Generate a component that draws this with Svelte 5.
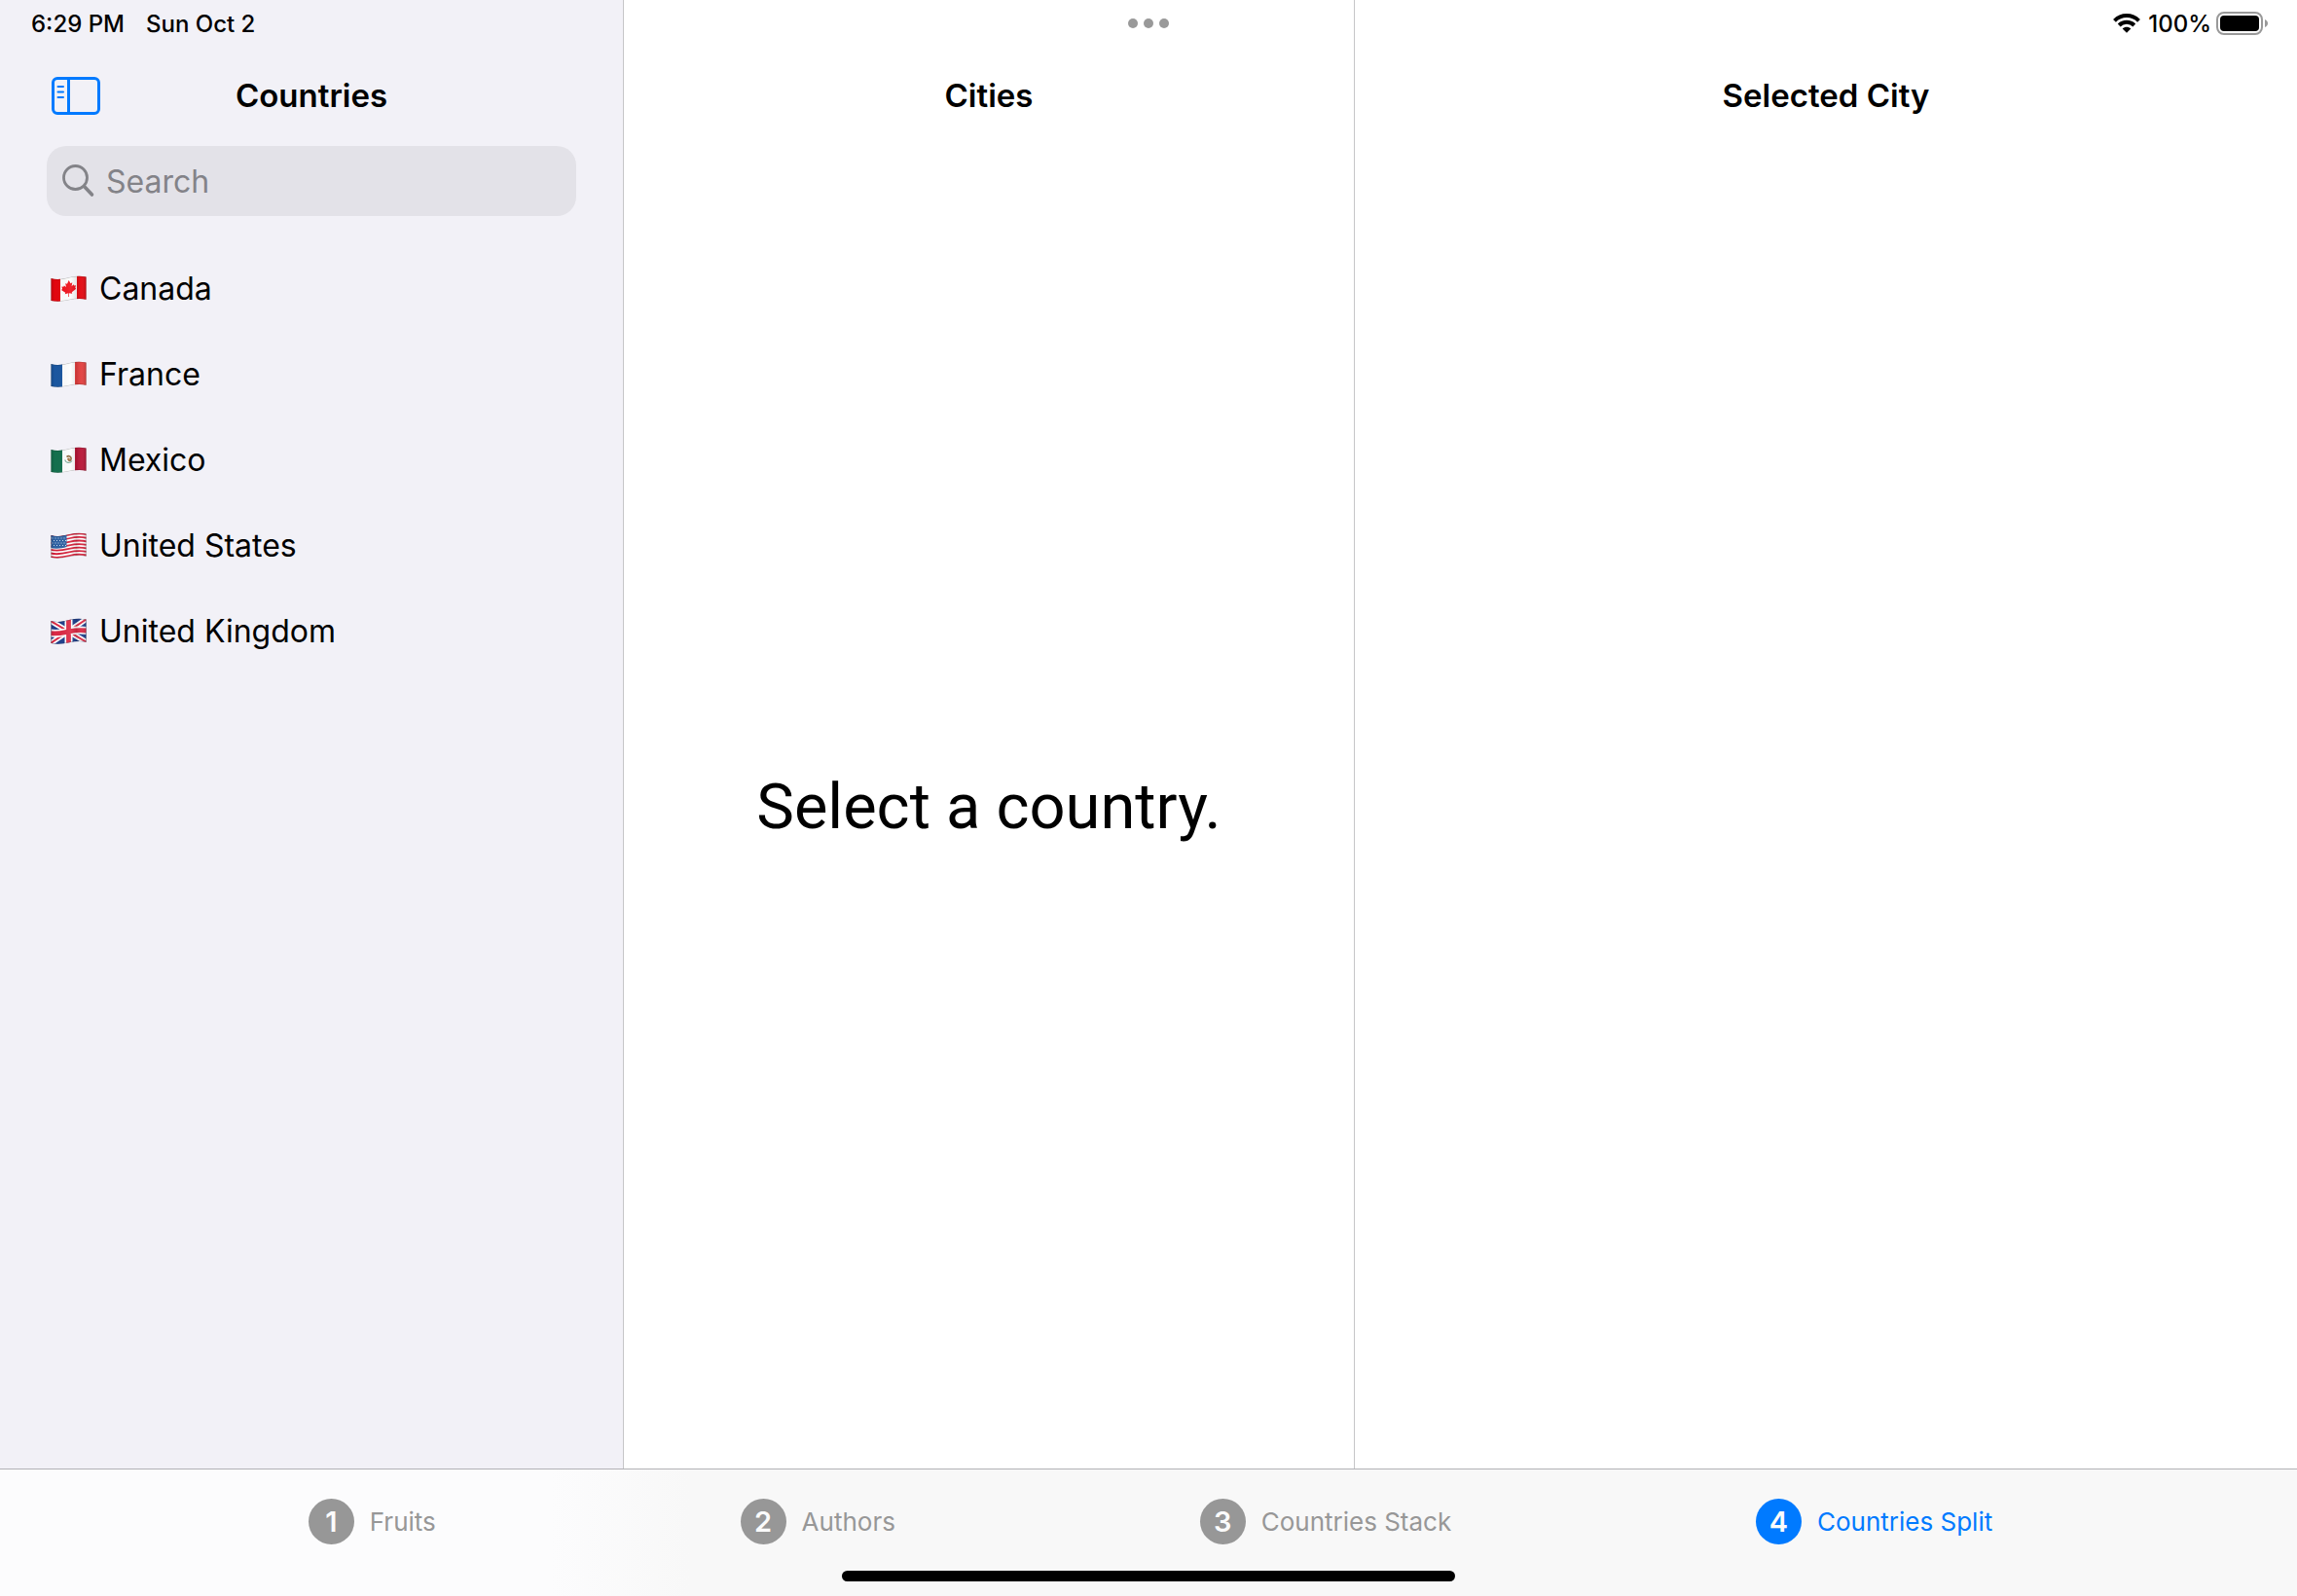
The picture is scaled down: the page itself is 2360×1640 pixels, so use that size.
<script>
  const countries = [
    { code: 'ca', name: 'Canada' },
    { code: 'fr', name: 'France' },
    { code: 'mx', name: 'Mexico' },
    { code: 'us', name: 'United States' },
    { code: 'gb', name: 'United Kingdom' },
  ];
  const tabs = ['Fruits', 'Authors', 'Countries Stack', 'Countries Split'];
  const stripes = [0, 1, 2, 3, 4, 5, 6];

  let query = $state('');
  let activeTab = $state(3);
  let shown = $derived(
    countries.filter((c) => c.name.toLowerCase().includes(query.toLowerCase()))
  );
</script>

<!-- Every flag shares one waving outline. -->
{#snippet flag(code)}
  <svg class="flag" viewBox="0 0 37 27" aria-hidden="true">
    <defs>
      <clipPath id="wave-{code}">
        <path d="M.5 3C7 5 13 3.5 19 2S31 .2 36.500 1.500V24.800C31 23.400 25 24 19 25.300S7 27.500 .5 26Z" />
      </clipPath>
      <linearGradient id="shade-{code}">
        <stop offset="0" stop-color="#000" stop-opacity=".16" />
        <stop offset=".12" stop-color="#000" stop-opacity="0" />
        <stop offset=".55" stop-color="#fff" stop-opacity=".08" />
        <stop offset=".72" stop-color="#000" stop-opacity=".1" />
        <stop offset=".85" stop-color="#fff" stop-opacity=".05" />
        <stop offset="1" stop-color="#000" stop-opacity=".18" />
      </linearGradient>
    </defs>
    <g clip-path="url(#wave-{code})">
      {#if code === 'us'}
        <rect width="37" height="27" fill="#fff" />
        {#each stripes as i}
          <path
            transform="translate(0 {i * 3.55})"
            d="M0 3.700C7 5.700 13 4.200 19 2.700S31 .9 37 2.200"
            fill="none" stroke="#d5203a" stroke-width="1.800"
          />
        {/each}
        <path d="M0 2C6 5 11 4 16.500 2V15C11 16.500 6 17.500 0 16Z" fill="#2f62a3" />
        <g stroke="#c9d8ec" stroke-width="1" stroke-dasharray="1 2">
          <path d="M1.500 6H16M3 8.500H16M1.500 11H16M3 13.500H16" />
        </g>
      {:else if code === 'gb'}
        <rect width="37" height="27" fill="#1f3f8c" />
        <path d="M0 3L37 25M0 26L37 1" stroke="#fff" stroke-width="5.500" />
        <path d="M0 3L37 25M0 26L37 1" stroke="#dc2a45" stroke-width="2" />
        <path d="M18.500 0V27M0 15.500C8 17 13 15 19 13.800S30 12 37 13" fill="none" stroke="#fff" stroke-width="8" />
        <path d="M18.500 0V27M0 15.500C8 17 13 15 19 13.800S30 12 37 13" fill="none" stroke="#dc2a45" stroke-width="4.800" />
      {:else}
        <rect width="37" height="27" fill="#fdfdfd" />
        {#if code === 'ca'}
          <path d="M0 0H10V27H0ZM27 0H37V27H27Z" fill="#e3060f" />
          <path
            d="M18.700 5L20.500 8.200L22.300 7.300L21.600 11.300L23.600 9.300L24.200 10.600L26 10.200L25.300 12.800L26.200 13.800L21.800 17.200L22.200 18.700L18.900 18.200V22H18.200V18.300L14.800 19.200L15.200 17.700L11 14.900L12 14L11.400 11.600L13.300 11.700L13.900 10.400L16 12L15.200 8.200L17 8.800Z"
            fill="#f0101a"
          />
        {:else if code === 'fr'}
          <path d="M0 0H12V27H0Z" fill="#1b57a0" />
          <path d="M25 0H37V27H25Z" fill="#e23e3d" />
        {:else}
          <path d="M0 0H12V27H0Z" fill="#14704e" />
          <path d="M25 0H37V27H25Z" fill="#b81536" />
          <path d="M16.500 10.500C18 9 20.500 9.500 21 11.500C21.500 13.500 20 15 18.500 14" fill="none" stroke="#8a6238" stroke-width="1.600" />
          <path d="M14.800 13.500C15.500 17 20 17.500 22 14.500" fill="none" stroke="#7fae9c" stroke-width="1.200" />
          <circle cx="18.500" cy="12.800" r="1.400" fill="#a4703c" />
        {/if}
      {/if}
      <rect width="37" height="27" fill="url(#shade-{code})" />
      <path
        d="M.5 3C7 5 13 3.500 19 2S31 .2 36.500 1.500V24.800C31 23.400 25 24 19 25.300S7 27.500 .5 26Z"
        fill="none" stroke="#000" stroke-opacity=".28" stroke-width="1"
      />
    </g>
  </svg>
{/snippet}

<div class="app">
  <header class="status">
    <span>6:29 PM</span>
    <span class="date">Sun Oct 2</span>
    <button class="dots" aria-label="Multitasking"><i></i><i></i><i></i></button>
    <svg class="wifi" viewBox="0 0 28 20" aria-hidden="true">
      <path d="M1.500 7.300C8.500 .3 19.500 .3 26.500 7.300" fill="none" stroke="#000" stroke-width="4" />
      <path d="M6.200 12C10.500 7.800 17.500 7.800 21.800 12" fill="none" stroke="#000" stroke-width="4" />
      <path d="M9.700 15.500C12 13.100 16 13.100 18.300 15.500L14 19.800Z" />
    </svg>
    <span class="percent">100%</span>
    <svg class="battery" viewBox="0 0 54 24" aria-hidden="true">
      <rect x="1" y="1" width="46" height="22" rx="7" fill="none" stroke="#999" stroke-width="2" />
      <rect x="4" y="4" width="40" height="16" rx="4" />
      <path d="M50 8C54 9.500 54 14.500 50 16Z" fill="#999" />
    </svg>
  </header>

  <main class="columns">
    <section class="sidebar">
      <div class="bar">
        <button class="toggle" aria-label="Toggle sidebar">
          <svg viewBox="0 0 52 40" aria-hidden="true" fill="none" stroke="#007aff">
            <rect x="2.500" y="2.500" width="47" height="36" rx="4.500" stroke-width="3" />
            <path d="M18.500 2V39" stroke-width="3" />
            <path d="M7.500 11H13M7.500 16.500H13M7.500 22H13" stroke-width="2" stroke-linecap="round" />
          </svg>
        </button>
        <h2>Countries</h2>
      </div>
      <label class="search">
        <svg viewBox="0 0 34 34" aria-hidden="true" fill="none" stroke="#838388" stroke-linecap="round">
          <circle cx="13.500" cy="13.500" r="12" stroke-width="2.800" />
          <path d="M22.500 22.500L30.500 31" stroke-width="3.600" />
        </svg>
        <input type="search" placeholder="Search" aria-label="Search" bind:value={query} />
      </label>
      <ul>
        {#each shown as country (country.code)}
          <li><button>{@render flag(country.code)}<span>{country.name}</span></button></li>
        {/each}
      </ul>
    </section>

    <section class="pane">
      <div class="bar"><h2>Cities</h2></div>
      <p class="empty">Select a country.</p>
    </section>

    <section class="pane">
      <div class="bar"><h2>Selected City</h2></div>
    </section>
  </main>

  <nav class="tabs">
    {#each tabs as tab, i}
      <button class:active={activeTab === i} onclick={() => (activeTab = i)}>
        <span class="badge">{i + 1}</span>
        <span>{tab}</span>
      </button>
    {/each}
    <div class="home"></div>
  </nav>
</div>

<style>
  :global(body) {
    background: #fff;
  }
  .app {
    position: relative;
    display: flex;
    flex-direction: column;
    min-height: 100vh;
    font-family: Inter, 'Liberation Sans', sans-serif;
    font-size: 32px;
    color: #000;
  }
  button {
    border: 0;
    padding: 0;
    background: none;
    font: inherit;
    color: inherit;
  }
  h2,
  p,
  ul {
    margin: 0;
    padding: 0;
  }

  .status {
    position: absolute;
    inset: 0 0 auto 0;
    display: flex;
    align-items: center;
    height: 48px;
    padding: 0 29px 0 32px;
    font-size: 24px;
    font-weight: 500;
  }
  .date {
    margin-left: 22px;
  }
  .dots {
    position: absolute;
    left: 50%;
    transform: translateX(-50%);
    display: flex;
    gap: 6px;
  }
  .dots i {
    width: 10px;
    height: 10px;
    border-radius: 50%;
    background: #999;
  }
  .wifi {
    width: 28px;
    height: 20px;
    margin-left: auto;
  }
  .percent {
    margin: 0 5px 0 8px;
  }
  .battery {
    width: 54px;
    height: 24px;
  }

  .columns {
    flex: 1;
    display: grid;
    grid-template-columns: minmax(0, 641fr) minmax(0, 751fr) minmax(0, 968fr);
  }
  .columns section {
    display: flex;
    flex-direction: column;
    box-sizing: border-box;
    border-right: 1px solid #c6c6c8;
  }
  .columns section:last-child {
    border-right: 0;
  }
  .sidebar {
    background: #f2f1f7;
  }
  .bar {
    position: relative;
    display: flex;
    align-items: center;
    justify-content: center;
    height: 100px;
    padding-top: 48px;
  }
  .bar h2 {
    font-size: 33px;
    font-weight: 600;
    line-height: 40px;
  }
  .toggle {
    position: absolute;
    left: 52px;
    height: 40px;
  }
  .toggle svg {
    display: block;
    width: 52px;
    height: 40px;
  }
  .search {
    display: flex;
    align-items: center;
    gap: 11px;
    height: 72px;
    margin: 2px 48px 30px;
    padding: 0 16px;
    border-radius: 20px;
    background: #e3e2e8;
  }
  .search svg {
    flex: none;
    width: 34px;
    height: 34px;
  }
  .search input {
    flex: 1;
    min-width: 0;
    border: 0;
    padding: 0;
    outline: 0;
    background: none;
    font: inherit;
  }
  .search input::placeholder {
    color: #838388;
    opacity: 1;
  }
  ul {
    list-style: none;
  }
  li button {
    display: flex;
    align-items: center;
    gap: 13px;
    width: 100%;
    height: 88px;
    padding: 0 52px;
    text-align: left;
  }
  .flag {
    width: 37px;
    height: 27px;
  }
  .empty {
    flex: 1;
    display: flex;
    align-items: center;
    justify-content: center;
    font-family: Roboto, 'Liberation Sans', sans-serif;
    font-size: 65px;
  }

  .tabs {
    position: relative;
    display: flex;
    justify-content: space-evenly;
    box-sizing: border-box;
    height: 131px;
    padding: 29px 0 0 4px;
    border-top: 1px solid #b2b1b5;
    background: linear-gradient(90deg, #fcfcfd 0 24%, #f8f8f8 30%);
  }
  .tabs button {
    display: flex;
    align-items: center;
    gap: 16px;
    height: 48px;
    font-size: 26px;
    color: #979797;
  }
  .tabs button.active {
    color: #007aff;
  }
  .badge {
    display: flex;
    align-items: center;
    justify-content: center;
    width: 47px;
    height: 47px;
    border-radius: 50%;
    background: #979797;
    color: #fbfbfb;
    font-size: 29px;
    font-weight: 600;
  }
  .active .badge {
    background: #007aff;
  }
  .home {
    position: absolute;
    left: 50%;
    bottom: 15px;
    width: 630px;
    height: 11px;
    border-radius: 6px;
    background: #000;
    transform: translateX(-50%);
  }
</style>
